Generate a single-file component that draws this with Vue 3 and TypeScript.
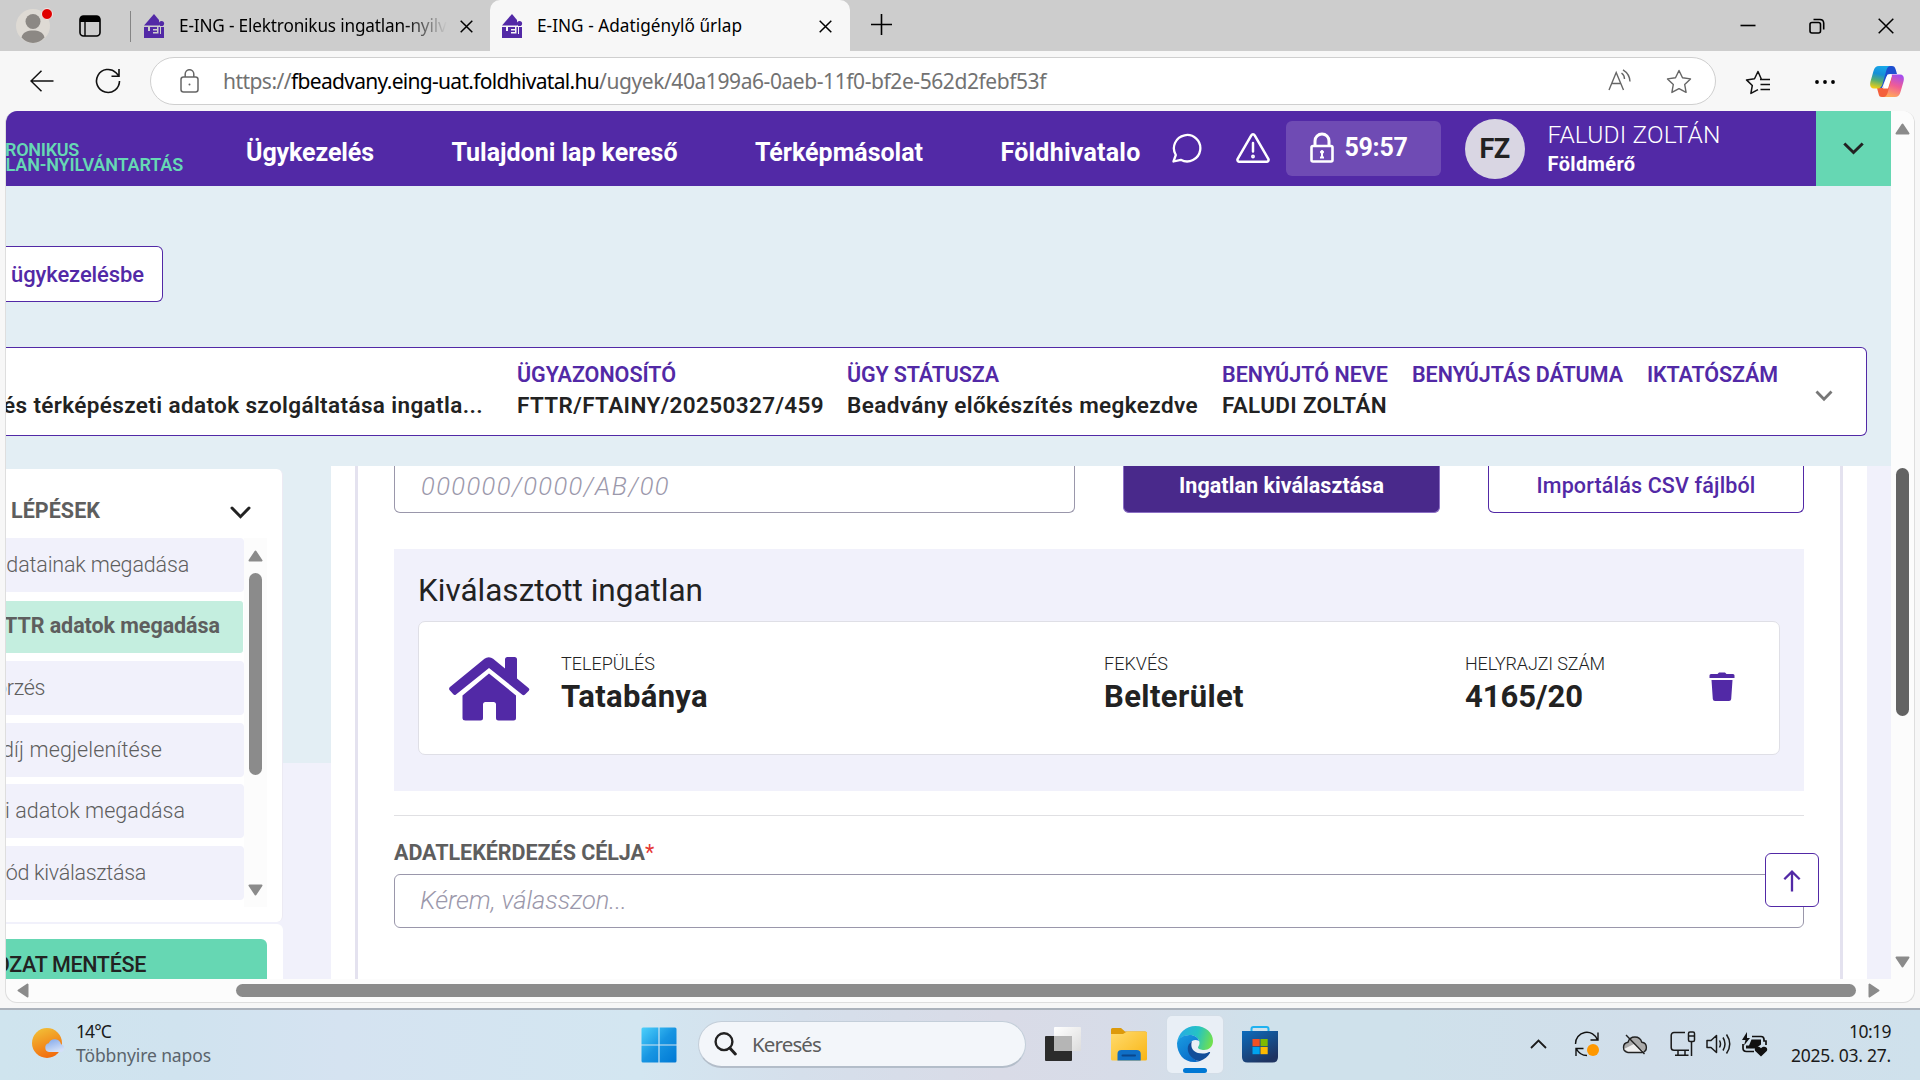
<script setup lang="ts">
import type { Directive } from 'vue'

// Tracks text so that it occupies the given advance width.
const vFit: Directive<HTMLElement, number> = {
  mounted(el, { value }) {
    const count = (el.textContent ?? '').length
    const natural = el.getBoundingClientRect().width
    if (count > 0) el.style.letterSpacing = `${((value - natural) / count).toFixed(3)}px`
  },
}

interface Label { text: string; width: number }
interface Fact { label: string; labelWidth: number; value: string; valueWidth: number; column: number }

const nav: Label[] = [
  { text: 'Ügykezelés', width: 128 },
  { text: 'Tulajdoni lap kereső', width: 226 },
  { text: 'Térképmásolat', width: 168 },
  { text: 'Földhivatalo', width: 140 },
]

const caseFacts: Fact[] = [
  { label: 'ÜGYAZONOSÍTÓ', labelWidth: 159, value: 'FTTR/FTAINY/20250327/459', valueWidth: 307, column: 330 },
  { label: 'ÜGY STÁTUSZA', labelWidth: 152, value: 'Beadvány előkészítés megkezdve', valueWidth: 351, column: 375 },
  { label: 'BENYÚJTÓ NEVE', labelWidth: 166, value: 'FALUDI ZOLTÁN', valueWidth: 165, column: 190 },
  { label: 'BENYÚJTÁS DÁTUMA', labelWidth: 211, value: '', valueWidth: 0, column: 235 },
  { label: 'IKTATÓSZÁM', labelWidth: 131, value: '', valueWidth: 0, column: 168 },
]

const steps: (Label & { end: number; active?: boolean })[] = [
  { text: 'adatainak megadása', width: 194, end: 183 },
  { text: 'FTTR adatok megadása', width: 228, end: 214, active: true },
  { text: 'Ellenőrzés', width: 93, end: 39 },
  { text: 'díj megjelenítése', width: 160, end: 156 },
  { text: 'i adatok megadása', width: 180, end: 179 },
  { text: 'mód kiválasztása', width: 159, end: 140 },
]

const parcel: Fact[] = [
  { label: 'TELEPÜLÉS', labelWidth: 94, value: 'Tatabánya', valueWidth: 147, column: 543 },
  { label: 'FEKVÉS', labelWidth: 64, value: 'Belterület', valueWidth: 140, column: 361 },
  { label: 'HELYRAJZI SZÁM', labelWidth: 140, value: '4165/20', valueWidth: 118, column: 244 },
]
</script>

<template>
  <div class="desktop">
    <div class="tabstrip">
      <svg class="profile" width="40" height="42" viewBox="0 0 40 42">
        <circle cx="18" cy="24" r="17" fill="#dedad4" />
        <circle cx="18" cy="19.500" r="7.500" fill="#8c8884" />
        <path d="M6.500 35.500C8 30 12.500 28.500 18 28.500s10 1.500 11.500 7A16.500 16.500 0 0 1 18 41a16.500 16.500 0 0 1-11.500-5.500z" fill="#8c8884" />
        <circle cx="32" cy="12" r="5.500" fill="#e00000" stroke="#eee" />
      </svg>
      <svg class="tab-actions" width="22" height="22" viewBox="0 0 22 22">
        <rect x="1" y="1" width="20" height="20" rx="3.500" fill="none" stroke="#000" stroke-width="1.600" />
        <path d="M1 7V4a3 3 0 0 1 3-3h14a3 3 0 0 1 3 3v3z" />
        <path d="M6 7v14" stroke="#000" stroke-width="1.400" />
      </svg>
      <span class="divider" />
      <div class="tab">
        <svg width="22" height="24" viewBox="0 0 22 24" fill="#5229a6">
          <path d="M1 11.500 11 0l5 6v5.500z" /><circle cx="18.500" cy="9.500" r="2.600" />
          <path d="M1 13h4v4h2v-4h7v2h-4v1.500h4V18h-4v1.500h5.500V13H17v7h1v-7h3v11H1z" />
        </svg>
        <div class="tab-title fade"><span v-fit="277" class="t">E-ING - Elektronikus ingatlan-nyilvá</span></div>
        <svg class="close1" width="13" height="13" viewBox="0 0 13 13" stroke="#000" stroke-width="1.500"><path d="M.7.700l11.600 11.600M12.300.700.700 12.300" /></svg>
      </div>
      <div class="tab active">
        <svg width="22" height="24" viewBox="0 0 22 24" fill="#5229a6">
          <path d="M1 11.500 11 0l5 6v5.500z" /><circle cx="18.500" cy="9.500" r="2.600" />
          <path d="M1 13h4v4h2v-4h7v2h-4v1.500h4V18h-4v1.500h5.500V13H17v7h1v-7h3v11H1z" />
        </svg>
        <div class="tab-title"><span v-fit="205" class="t">E-ING - Adatigénylő űrlap</span></div>
        <svg class="close2" width="13" height="13" viewBox="0 0 13 13" stroke="#000" stroke-width="1.500"><path d="M.7.700l11.600 11.600M12.300.700.700 12.300" /></svg>
      </div>
      <svg class="newtab" width="21" height="21" viewBox="0 0 21 21" stroke="#000" stroke-width="1.600"><path d="M10.500 0v21M0 10.500h21" /></svg>
      <div class="window-buttons">
        <svg width="16" height="16" viewBox="0 0 16 16" stroke="#000" stroke-width="1.600"><path d="M.5 7.500h15" /></svg>
        <svg width="16" height="16" viewBox="0 0 16 16" fill="none" stroke="#000" stroke-width="1.600"><rect x="1" y="4.500" width="10.500" height="10.500" rx="2" /><path d="M4.500 1.500H11A3.800 3.800 0 0 1 14.700 5v6.500" /></svg>
        <svg width="16" height="16" viewBox="0 0 16 16" stroke="#000" stroke-width="1.500"><path d="M.7.700l14.600 14.600M15.300.700.700 15.300" /></svg>
      </div>
    </div>

    <div class="toolbar">
      <svg class="back" width="24" height="22" viewBox="0 0 24 22" fill="none" stroke="#111" stroke-width="1.500"><path d="M23.500 11H1M11.500.700 1 11l10.500 10.300" /></svg>
      <svg class="reload" width="26" height="26" viewBox="0 0 26 26" fill="none" stroke="#111" stroke-width="1.600"><path d="M24.500 13A11.500 11.500 0 1 1 21 4.700L24 8M24 1v7.200h-7.500" /></svg>
      <div class="address">
        <svg class="padlock" width="19" height="24" viewBox="0 0 19 24" fill="none" stroke="#666" stroke-width="1.500"><rect x="1" y="8" width="17" height="15" rx="2.500" /><path d="M5.200 8V5a4.300 4.300 0 0 1 8.600 0v3" /><circle cx="9.500" cy="15.500" r="1" fill="#666" stroke="none" /></svg>
        <div class="url"><span v-fit="68" class="t">https://</span><span v-fit="308" class="t host">fbeadvany.eing-uat.foldhivatal.hu</span><span v-fit="447" class="t">/ugyek/40a199a6-0aeb-11f0-bf2e-562d2febf53f</span></div>
        <svg class="read" width="24" height="22" viewBox="0 0 24 22" fill="none" stroke="#666" stroke-width="1.400"><path d="M1 21 8.200 3.500 15.500 21M3.800 14.500h8.900M13.500 4c2 1.500 3 3.500 3 6M15 .800c4 2.500 6.800 6.500 7 11.700" /></svg>
        <svg class="star" width="26" height="25" viewBox="0 0 26 25" fill="none" stroke="#666" stroke-width="1.400" stroke-linejoin="round"><path d="m13 1.500 3.500 7.300 8 1.100-5.800 5.600 1.400 7.900-7.100-3.800-7.100 3.800 1.400-7.900L1.500 9.900l8-1.100z" /></svg>
      </div>
      <svg class="favs" width="26" height="25" viewBox="0 0 26 25" fill="none" stroke="#111" stroke-width="1.500" stroke-linejoin="round"><path d="M16.500 9.500 13 1.500 9.500 8.800l-8 1.100 5.800 5.600-1.400 7.900 7.100-3.800M15 9.500h10M15.500 14.500H25M15.500 19.500H25" /></svg>
      <svg class="dots" width="20" height="4" viewBox="0 0 20 4"><circle cx="2" cy="2" r="1.900" /><circle cx="10" cy="2" r="1.900" /><circle cx="18" cy="2" r="1.900" /></svg>
      <svg class="copilot" width="34" height="31" viewBox="0 0 34 31">
        <defs>
          <linearGradient id="cpA" x1=".5" y1="0" x2=".3" y2="1"><stop offset="0" stop-color="#18a7e8" /><stop offset=".35" stop-color="#168fd8" /><stop offset=".65" stop-color="#57ae72" /><stop offset="1" stop-color="#f4cf12" /></linearGradient>
          <linearGradient id="cpB" x1=".7" y1="0" x2=".4" y2="1"><stop offset="0" stop-color="#a44df0" /><stop offset=".5" stop-color="#f05c96" /><stop offset="1" stop-color="#ffa75b" /></linearGradient>
        </defs>
        <path d="M15 0h7c2 0 3 1 3.700 3.500L27 8h-6c-3 0-4.500 2-5.300 4.500L12 22H7l4-17C12 2 13 0 15 0z" fill="#1d4fd0" />
        <path d="M10 31h8c2.500 0 4-2 5-5l4-16h-6l-8 12H7l1.500 5.500C9 30 9.500 31 12 31z" fill="#f4603c" />
        <path d="M13 22.500 17.500 8.500h5L18 22.500z" fill="#fff" />
        <path d="M9 0h11c-2 .500-3 2-3.700 4.500L12.500 18c-1 3-2.500 4.500-5 4.500H4C.5 22.500-.500 19.500.500 15.500L3.500 5C4.500 1.500 6 0 9 0z" fill="url(#cpA)" />
        <path d="M21.500 8.500H30c3.500 0 4.500 3 3.500 7l-3 10.500c-1 3.500-2.500 5-5.500 5H14c2-.500 3-2 3.700-4.500L21.500 13c1-3 0-4.500 0-4.500z" fill="url(#cpB)" />
      </svg>
    </div>

    <div class="frame">
      <div class="viewport">
        <div class="page">
          <header class="header">
            <div class="brand"><span v-fit="125" class="t b1">ELEKTRONIKUS</span><span v-fit="229" class="t b2">INGATLAN-NYILVÁNTARTÁS</span></div>
            <nav class="nav"><span v-for="n in nav" :key="n.text" v-fit="n.width" class="t">{{ n.text }}</span></nav>
            <svg class="chat" width="30" height="30" viewBox="0 0 30 30" fill="none" stroke="#fff" stroke-width="2.300" stroke-linejoin="round"><path d="M1.500 28.500 3.800 22A13.200 13.200 0 1 1 8.800 26.800z" /></svg>
            <svg class="warn" width="34" height="30" viewBox="0 0 34 30" fill="none" stroke="#fff" stroke-width="2.300" stroke-linejoin="round" stroke-linecap="round"><path d="M15.300 2.300a2 2 0 0 1 3.400 0l13.600 23.500a2 2 0 0 1-1.700 3H3.400a2 2 0 0 1-1.700-3zM17 10v8.500" stroke-width="2.500" /><circle cx="17" cy="23.500" r=".8" /></svg>
            <div class="timer">
              <svg width="24" height="31" viewBox="0 0 24 31" fill="none" stroke="#fff"><rect x="1.500" y="14" width="21" height="15.500" rx="1.500" stroke-width="2.600" /><path d="M5 14V9a7 7 0 0 1 14 0v5" stroke-width="3" /><path d="M12 19v7M10 25.500h4" stroke-width="2" /><circle cx="12" cy="20" r="1.500" fill="#fff" /></svg>
              <span v-fit="63" class="t">59:57</span>
            </div>
            <div class="avatar"><span v-fit="30" class="t">FZ</span></div>
            <div class="user"><span v-fit="173" class="t name">FALUDI ZOLTÁN</span><span v-fit="88" class="t role">Földmérő</span></div>
            <div class="menu"><svg width="21" height="13" viewBox="0 0 21 13" fill="none" stroke="#222" stroke-width="3"><path d="m1.300 1.500 9.200 9 9.200-9" /></svg></div>
          </header>

          <button class="back-button"><span v-fit="133" class="t">ügykezelésbe</span></button>

          <section class="case">
            <div class="case-type"><span v-fit="480" class="t value">és térképészeti adatok szolgáltatása ingatla...</span></div>
            <div v-for="f in caseFacts" :key="f.label" class="fact" :style="{ width: f.column + 'px' }">
              <span v-fit="f.labelWidth" class="t label">{{ f.label }}</span>
              <span v-fit="f.valueWidth" class="t value">{{ f.value }}</span>
            </div>
            <svg class="case-toggle" width="18" height="12" viewBox="0 0 18 12" fill="none" stroke="#777" stroke-width="2.800"><path d="m1.500 1.500 7.500 7.700 7.500-7.700" /></svg>
          </section>

          <div class="workspace">
            <aside class="side">
              <div class="steps">
                <div class="steps-head"><span v-fit="89" class="t">LÉPÉSEK</span><svg width="21" height="14" viewBox="0 0 21 14" fill="none" stroke="#222" stroke-width="3" stroke-linecap="round"><path d="m2 2 8.500 8.700L19 2" /></svg></div>
                <div class="steps-body">
                  <div class="step-list">
                    <div v-for="s in steps" :key="s.text" class="step" :class="{ on: s.active }">
                      <div class="step-text" :style="{ width: s.end + 'px' }"><span v-fit="s.width" class="t">{{ s.text }}</span></div>
                    </div>
                  </div>
                  <div class="inner-scroll">
                    <svg width="15" height="12" viewBox="0 0 15 12"><path d="M7.500 1.500 13.500 10.500h-12z" /></svg>
                    <i />
                    <svg class="down" width="15" height="12" viewBox="0 0 15 12"><path d="M7.500 10.500 1.500 1.500h12z" /></svg>
                  </div>
                </div>
              </div>
              <div class="save"><div class="save-button"><div class="save-text"><span v-fit="151" class="t">OZAT MENTÉSE</span></div></div></div>
            </aside>

            <main class="main">
              <div class="form">
                <div class="lookup">
                  <div class="field"><span v-fit="249" class="t">000000/0000/AB/00</span></div>
                  <div class="btn solid"><span v-fit="205" class="t">Ingatlan kiválasztása</span></div>
                  <div class="btn"><span v-fit="219" class="t">Importálás CSV fájlból</span></div>
                </div>
                <div class="panel">
                  <div class="panel-title"><span v-fit="285" class="t">Kiválasztott ingatlan</span></div>
                  <div class="card">
                    <svg class="house" width="82" height="65" viewBox="0 0 82 65" fill="#5229a6"><path d="M2 31 36.500 2.800a6.500 6.500 0 0 1 8.600 0L57 12.500V3.500Q57 1 59.500 1h7Q69 1 69 3.500v19L80.500 32q1.500 1.300.3 2.700L77 38.500q-1.300 1.200-2.700.2L41 12 8 38.500q-1.500 1.200-2.700-.200L1.500 34Q.5 32.300 2 31z" /><path d="m41 17.500 27 22V62q0 2.500-2.500 2.500H50.500Q48 64.500 48 62V48.500Q48 46 45.500 46h-8Q35 46 35 48.500V62q0 2.500-2.500 2.500h-15Q14.500 64.500 14.500 62V39.500z" /></svg>
                    <div v-for="p in parcel" :key="p.label" class="parcel" :style="{ width: p.column + 'px' }">
                      <span v-fit="p.labelWidth" class="t small">{{ p.label }}</span>
                      <span v-fit="p.valueWidth" class="t big">{{ p.value }}</span>
                    </div>
                    <svg class="trash" width="26" height="30" viewBox="0 0 26 30" fill="#5229a6"><path d="M8.500 2 10 .500h6L17.500 2H24q1.500 0 1.500 1.500V6H.5V3.500Q.5 2 2 2zM2.500 8h21l-1.300 19q-.2 2-2.200 2H6q-2 0-2.200-2z" /></svg>
                  </div>
                </div>
                <hr />
                <div class="purpose"><span v-fit="251" class="t">ADATLEKÉRDEZÉS CÉLJA</span><em>*</em></div>
                <div class="select"><span v-fit="207" class="t">Kérem, válasszon...</span></div>
              </div>
            </main>
            <div class="gutter" />
          </div>
          <div class="to-top"><svg width="18" height="22" viewBox="0 0 18 22" fill="none" stroke="#5229a6" stroke-width="2.300"><path d="M9 21.500V2M1.300 9.200 9 1.700l7.700 7.500" /></svg></div>
        </div>

        <div class="vscroll">
          <svg width="15" height="12" viewBox="0 0 15 12"><path d="M7.500 1.500 13.500 10.500h-12z" /></svg>
          <i />
          <svg class="down" width="15" height="12" viewBox="0 0 15 12"><path d="M7.500 10.500 1.500 1.500h12z" /></svg>
        </div>
        <div class="hscroll">
          <svg width="12" height="15" viewBox="0 0 12 15"><path d="M1.500 7.500 10.500 1.500v12z" /></svg>
          <i />
          <svg class="right" width="12" height="15" viewBox="0 0 12 15"><path d="M10.500 7.500 1.500 1.500v12z" /></svg>
        </div>
      </div>
    </div>

    <div class="taskbar">
      <svg class="weather" width="34" height="32" viewBox="0 0 34 32">
        <defs><linearGradient id="sun" x1=".2" y1="0" x2=".6" y2="1"><stop offset="0" stop-color="#f2c037" /><stop offset="1" stop-color="#f26a0c" /></linearGradient>
          <linearGradient id="cloud" x1="0" y1="0" x2=".5" y2="1"><stop offset="0" stop-color="#7fa6ea" /><stop offset="1" stop-color="#d3e0f8" /></linearGradient></defs>
        <circle cx="15" cy="16" r="15" fill="url(#sun)" />
        <path d="M17 25a4.500 4.500 0 0 1-.3-8.800A6.500 6.500 0 0 1 29 17.300 4 4 0 0 1 29.500 25z" fill="url(#cloud)" />
      </svg>
      <div class="weather-text"><span v-fit="35" class="t">14°C</span><span v-fit="135" class="t dim">Többnyire napos</span></div>
      <svg class="start" width="36" height="36" viewBox="0 0 36 36">
        <defs><linearGradient id="win" x1="0" y1="0" x2="1" y2="1"><stop offset="0" stop-color="#4cd0fb" /><stop offset=".5" stop-color="#1795e2" /><stop offset="1" stop-color="#0078d4" /></linearGradient></defs>
        <path d="M2 .500h15.400v16.900H.500V2Q.5.500 2 .500zM18.600.500H34q1.500 0 1.500 1.500v15.400H18.600zM.5 18.600h16.900v16.900H2Q.5 35.500.500 34zM18.600 18.600h16.900V34q0 1.500-1.500 1.500H18.600z" fill="url(#win)" />
      </svg>
      <div class="search">
        <svg width="23" height="24" viewBox="0 0 23 24" fill="none" stroke="#222" stroke-width="2.400" stroke-linecap="round"><circle cx="10" cy="9.700" r="8.400" /><path d="m15.800 16 5.500 6" stroke-width="3" /></svg>
        <span v-fit="69" class="t">Keresés</span>
      </div>
      <svg class="taskview" width="36" height="36" viewBox="0 0 36 36">
        <defs><linearGradient id="tv" x1="0" y1="0" x2="1" y2="1"><stop offset="0" stop-color="#fff" /><stop offset="1" stop-color="#dcdcdc" /></linearGradient></defs>
        <rect x="0" y="10" width="27" height="25" rx="1" fill="#2b2b2b" /><rect x="9" y="1" width="27" height="24" rx="1" fill="url(#tv)" /><path d="M9 10h18v15H9z" fill="#b5b5b5" />
      </svg>
      <svg class="folder" width="36" height="33" viewBox="0 0 36 33">
        <defs><linearGradient id="fold" x1="0" y1="0" x2="1" y2="1"><stop offset="0" stop-color="#ffdb6e" /><stop offset="1" stop-color="#f9b514" /></linearGradient></defs>
        <path d="M0 1.500Q0 0 1.500 0H10l4 3.500H34q2 0 2 2V9H0z" fill="#dd9a0b" /><path d="M0 6h12l4-2.500h18.500q1.500 0 1.500 1.500v26q0 1.500-1.500 1.500h-33Q0 32.500 0 31z" fill="url(#fold)" />
        <path d="M6.500 32.500V26q0-4 4-4h15.200q4 0 4 4v6.500z" fill="#0f6fc6" /><rect x="10.500" y="26.500" width="14.500" height="2" rx="1" fill="#0a478c" />
      </svg>
      <div class="edge">
        <svg width="36" height="36" viewBox="0 0 36 36">
          <defs>
            <linearGradient id="e1" x1="0" y1=".3" x2="1" y2=".5"><stop offset="0" stop-color="#27a9e8" /><stop offset=".55" stop-color="#25c3c3" /><stop offset="1" stop-color="#70e04e" /></linearGradient>
            <linearGradient id="e2" x1="0" y1="0" x2=".6" y2="1"><stop offset="0" stop-color="#1a9de2" /><stop offset="1" stop-color="#0a6cc9" /></linearGradient>
          </defs>
          <path d="M0 17C1 7 9 0 18.500 0 29 0 36 7 36 15c0 6-4.500 9-9 9-3 0-6-1-6-2.500 0-1 1.500-2 1.500-4.500 0-4-4-8-10-8C6 9 1.500 13 0 17z" fill="url(#e1)" />
          <path d="M0 17c1.500-5 6-8 12.500-8 5 0 8.500 2.500 9.500 6-2-1.500-5-1.500-7 0-3 2-5 8-1 14 2.500 4 6 6.500 9 6-2 .8-4 1-6 1C7 36 0 28 0 17z" fill="url(#e2)" />
          <path d="M15 15c-6 4-5 11-1 15.500 3 3.500 6.500 4.800 9 4.500 4.500-1.500 8-4.500 10-8 .4-.8-.3-1.300-1-.9-2 1-4 1.500-6.500 1.500-7 0-10.500-3.600-11-7-.3-2.500 0-4 .5-5.600z" fill="#114d99" />
        </svg>
        <i />
      </div>
      <svg class="store" width="36" height="37" viewBox="0 0 36 37">
        <defs><linearGradient id="st" x1="0" y1="0" x2=".6" y2="1"><stop offset="0" stop-color="#0c6cbd" /><stop offset="1" stop-color="#1f3461" /></linearGradient></defs>
        <path d="M9.500 7V3q0-2 2-2h13q2 0 2 2v4" fill="none" stroke="#1fb2f0" stroke-width="2" /><path d="M0 5h36v26q0 5.500-5.500 5.500h-25Q0 36.500 0 31z" fill="url(#st)" />
        <path d="M10.500 13h7.200v7.200h-7.200z" fill="#f25022" /><path d="M18.500 13h7.200v7.200h-7.200z" fill="#7fba00" /><path d="M10.500 21h7.200v7.200h-7.200z" fill="#00a4ef" /><path d="M18.500 21h7.200v7.200h-7.200z" fill="#ffb900" />
      </svg>
      <div class="tray">
        <svg class="up" width="17" height="10" viewBox="0 0 17 10" fill="none" stroke="#1a1a1a" stroke-width="1.800"><path d="m1 9 7.500-7.500L16 9" /></svg>
        <svg class="sync" width="26" height="26" viewBox="0 0 26 26" fill="none" stroke="#111" stroke-width="1.400"><path d="M1.500 13A11.300 11.300 0 0 1 23.500 9M24 1.500V9h-7.500M2 25v-7.500h7.500M2.500 18c2 4 6 6.500 10.500 6.500" /><circle cx="19" cy="19" r="6" fill="#ff9800" stroke="none" /></svg>
        <svg class="cloud" width="26" height="21" viewBox="0 0 26 21" fill="none" stroke="#222" stroke-width="1.400"><path d="M6 18.500a5.200 5.200 0 0 1 0-10.300 7.200 7.200 0 0 1 13.800 0 5.200 5.200 0 0 1 .2 10.300z" fill="#aaa" /><path d="m2 15 10-5 10 7.500H6z" fill="#eee" stroke="none" /><path d="M4 1l18.500 19" /></svg>
        <svg class="net" width="26" height="26" viewBox="0 0 26 26" fill="none" stroke="#1a1a1a" stroke-width="1.500"><path d="M15 1.500H4A2.800 2.800 0 0 0 1.200 4.300V16.500A2.800 2.800 0 0 0 4 19.300h15M8 19.500V24M15 19.500V24M5 24.300h13.500M21.500 10.500V25" /><rect x="18.500" y="1" width="6" height="9.500" rx="1.500" /><path d="M18.500 5h6" /></svg>
        <svg class="sound" width="26" height="22" viewBox="0 0 26 22" fill="none" stroke="#1a1a1a" stroke-width="1.500" stroke-linejoin="round"><path d="M1 7.500h4l5.500-5v17L5 14.500H1zM13.500 7.500q2 3.500 0 7M17 4.500q4 6.500 0 13M20.500 1.500q6.500 9.500 0 19" /></svg>
        <svg class="battery" width="26" height="25" viewBox="0 0 26 25" fill="none" stroke="#111" stroke-width="1.700"><path d="M10 4.500h9Q22 4.500 22 7.500V9h2v4M1 12v4Q1 19.500 4.500 19.500H12" /><path d="M9.500 7.500H19v5l-5.500 4H4v-3h3zM5 0 0 8h3.500L2 13.500 8 6H5z" fill="#111" stroke="none" /><path d="m19 24.500-5.500-5.300c-2.500-3 2-6.500 5.500-3 3.500-3.500 8 0 5.500 3z" fill="#111" stroke="none" /></svg>
        <div class="clock"><span v-fit="42" class="t">10:19</span><span v-fit="100" class="t">2025. 03. 27.</span></div>
      </div>
    </div>
  </div>
</template>

<style>
html, body { margin: 0; overflow: hidden; }
</style>

<style scoped>
.desktop { width: 1920px; height: 1080px; display: flex; flex-direction: column; overflow: hidden; background: #f7f7f7; font-family: "Noto Sans", "Open Sans", sans-serif; color: #000; }
.desktop *, .desktop { box-sizing: border-box; }
.t { display: inline-block; white-space: pre; flex: none; }
svg { display: block; flex: none; }

.tabstrip { height: 51px; background: #cdcdcd; display: flex; align-items: flex-start; flex: none; }
.profile { margin: 2px 0 0 15px; }
.tab-actions { margin: 15px 0 0 24px; }
.divider { width: 1px; height: 31px; margin: 11px 0 0 29px; background: #858585; }
.tab { height: 51px; width: 359px; display: flex; align-items: flex-start; padding: 14px 0 0 12px; }
.tab.active { background: #f7f7f7; border-radius: 10px 10px 0 0; padding-left: 11px; width: 360px; }
.tab-title { width: 268px; height: 26px; overflow: hidden; margin: -1px 0 0 14px; font-size: 17.200px; line-height: 26px; }
.fade { mask-image: linear-gradient(90deg, #000 84%, transparent 100%); }
.active .tab-title { width: 267px; }
.close1 { margin: 6px 0 0 13px; }
.close2 { margin: 6px 0 0 15px; }
.newtab { margin: 14px 0 0 21px; }
.window-buttons { display: flex; gap: 53px; margin: 18px 26px 0 auto; }

.toolbar { height: 60px; display: flex; align-items: flex-start; flex: none; }
.back { margin: 19px 0 0 30px; }
.reload { margin: 17px 0 0 41px; }
.address { width: 1566px; height: 48px; margin: 6px 0 0 29px; border: 1px solid #cfcfcf; border-radius: 24px; background: #fff; display: flex; align-items: flex-start; }
.padlock { margin: 11px 0 0 29px; }
.url { margin: 7px 0 0 25px; font-size: 21px; line-height: 32px; color: #727272; display: flex; width: 1384px; }
.url .t:first-child { margin-left: -1px; }
.host { color: #000; }
.read { margin: 11px 0 0 0; }
.star { margin: 11px 0 0 34px; }
.favs { margin: 19px 0 0 29px; }
.dots { margin: 29px 0 0 44px; }
.copilot { margin: 15px 0 0 35px; }

.frame { height: 899px; padding: 0 5px; border-bottom: 2px solid #abb2bb; flex: none; }
.viewport { width: 1910px; height: 892px; border: 1px solid #dedede; border-top: 0; border-radius: 12px; overflow: hidden; background: #fcfcfc; display: grid; grid-template-columns: 1885px 23px; grid-template-rows: 868px 23px; }
.page { position: relative; overflow: hidden; background: linear-gradient(#e3eef4 652px, #f1f1fb 652px); font-family: Roboto, "Noto Sans", sans-serif; color: #222; }

.header { height: 75px; background: #5229a6; display: flex; align-items: flex-start; color: #fff; }
.brand { width: 177px; height: 75px; padding-top: 31px; display: flex; flex-direction: column; align-items: flex-end; color: #66d8b4; font-weight: 600; font-size: 18px; line-height: 15px; flex: none; }
.b1 { margin-right: 104px; }
.nav { display: flex; gap: 77.500px; margin: 27px 0 0 63px; font-size: 25px; font-weight: 700; line-height: 30px; }
.chat { margin: 22px 0 0 31px; }
.warn { margin: 22px 0 0 34px; }
.timer { width: 155px; height: 55px; margin: 10px 0 0 16px; background: #6f4bb4; border-radius: 6px; display: flex; align-items: center; gap: 11px; padding: 0 0 2px 24px; font-size: 25px; font-weight: 700; }
.avatar { width: 60px; height: 60px; margin: 8px 0 0 24px; border-radius: 50%; background: #d9d6e3; color: #222; display: flex; align-items: center; justify-content: center; font-weight: 700; font-size: 27px; padding-bottom: 1px; }
.user { margin: 9px 0 0 23px; display: flex; flex-direction: column; align-items: flex-start; }
.name { font-size: 24.500px; line-height: 30px; font-weight: 300; }
.role { font-size: 20px; line-height: 28px; font-weight: 700; }
.menu { width: 75px; height: 75px; margin-left: auto; background: #66d7b3; display: flex; align-items: center; justify-content: center; }

.back-button { width: 157px; height: 56px; margin: 60px 0 0; padding: 2px 18px 0 0; display: flex; justify-content: flex-end; align-items: center; overflow: hidden; background: #fff; border: 1px solid #5229a6; border-left: 0; border-radius: 0 6px 6px 0; color: #5229a6; font: 500 22px/30px Roboto, sans-serif; }
.case { height: 89px; width: 1861px; margin-top: 45px; background: #fff; border: 1px solid #5229a6; border-left: 0; border-radius: 0 6px 6px 0; display: flex; align-items: flex-start; padding-top: 11px; font-size: 21.500px; line-height: 31px; }
.case-type { width: 477px; margin: 31px 34px 0 0; display: flex; justify-content: flex-end; overflow: hidden; }
.fact { display: flex; flex-direction: column; align-items: flex-start; flex: none; }
.label { color: #5229a6; font-weight: 600; }
.value { font-weight: 600; font-size: 22.500px; }
.case-toggle { margin-top: 31px; }

.workspace { display: flex; align-items: flex-start; margin-top: 30px; height: 513px; }
.side { width: 277px; padding-top: 2.500px; margin-right: 48px; flex: none; }
.steps { height: 453.500px; background: #fff; border-radius: 0 6px 6px 0; border-right: 1px solid #eceaf3; }
.steps-head { height: 69.500px; display: flex; align-items: flex-start; justify-content: space-between; padding: 26px 31px 0 5px; color: #5e5e5e; font-weight: 700; font-size: 21.500px; line-height: 32px; }
.steps-head svg { margin-top: 11px; }
.steps-body { display: flex; height: 369px; }
.step-list { width: 238px; display: flex; flex-direction: column; gap: 7.500px; }
.step { height: 54px; flex: none; background: #f1f1fb; border-radius: 0 4px 4px 0; color: #5e5e5e; font-size: 21.500px; line-height: 53px; font-weight: 300; overflow: hidden; }
.step.on { background: #c4eedf; font-weight: 700; border: solid #fff; border-width: 1px 1px 1px 0; line-height: 50px; }
.step-text { display: flex; justify-content: flex-end; }
.inner-scroll, .vscroll { width: 23px; background: #fcfcfc; display: flex; flex-direction: column; align-items: center; padding-right: 1px; }
.inner-scroll svg, .vscroll svg, .hscroll svg { fill: #8b8b8b; stroke: #8b8b8b; stroke-width: 2px; stroke-linejoin: round; }
.inner-scroll svg { margin-top: 12px; }
.inner-scroll i { width: 13px; height: 202px; margin-top: 11px; border-radius: 7px; background: #8b8b8b; }
.inner-scroll .down { margin-top: 109px; }
.save { height: 57px; margin-top: 2px; padding-top: 15px; background: #fff; border-radius: 0 6px 0 0; }
.save-button { width: 261px; height: 42px; background: #66d7b3; border-radius: 0 6px 0 0; overflow: hidden; }
.save-text { width: 140px; display: flex; justify-content: flex-end; padding-top: 11px; font-size: 21.500px; line-height: 30px; font-weight: 500; }

.main { width: 1536px; height: 513px; background: #fff; padding: 0 24px; flex: none; }
.gutter { flex: 1; height: 513px; background: #f1f1fb; }
.form { height: 513px; border: solid #e4e2ef; border-width: 0 3px; padding: 0 36px; }
.lookup { height: 47px; display: flex; gap: 48px; }
.field { width: 681px; border: 1px solid #9a97ab; border-top: 0; border-radius: 0 0 6px 6px; padding: 4px 0 0 26px; }
.field, .select { color: #9b98ab; font-size: 25.500px; line-height: 32px; font-weight: 300; font-style: italic; }
.btn { width: 316px; border: 1px solid #5229a6; border-top: 0; border-radius: 0 0 6px 6px; color: #5229a6; display: flex; justify-content: center; padding-top: 5px; font-size: 21.500px; line-height: 30px; font-weight: 500; }
.btn.solid { width: 317px; background: #49298b; border-color: #8b6fc4; color: #fff; font-weight: 700; }
.panel { height: 242px; margin-top: 36px; padding: 0 24px; background: #f1f1fb; }
.panel-title { height: 72px; padding-top: 11.500px; font-size: 31.500px; line-height: 60px; }
.card { height: 134px; background: #fff; border: 1px solid #dfdfe6; border-radius: 7px; display: flex; align-items: flex-start; }
.house { margin: 34px 31px 0 29px; }
.parcel { display: flex; flex-direction: column; align-items: flex-start; margin-top: 30px; }
.small { font-size: 18px; line-height: 24px; font-weight: 300; }
.big { font-size: 31px; line-height: 41px; font-weight: 700; }
.trash { margin-top: 50px; }
hr { border: 0; height: 1px; background: #e0e0e3; margin: 24px 0 22px; }
.purpose { height: 36px; display: flex; color: #5e5e5e; font-size: 21.500px; line-height: 30px; font-weight: 700; }
.purpose em { color: #e53935; font-style: normal; font-weight: 400; }
.select { height: 54px; border: 1px solid #9a97ab; border-radius: 6px; padding: 9px 0 0 25px; }
.to-top { position: absolute; left: 1759px; top: 742px; width: 54px; height: 54px; border: 1px solid #5229a6; border-radius: 6px; background: #fff; display: flex; align-items: center; justify-content: center; padding-top: 2px; }

.vscroll { padding: 12px 0 0; }
.vscroll i { width: 13px; height: 248px; margin-top: 333px; border-radius: 7px; background: #636363; }
.vscroll .down { margin-top: 240px; }
.hscroll { grid-column: 1 / 3; display: flex; align-items: flex-start; padding: 4px 0 0 11px; }
.hscroll i { width: 1620px; height: 13px; margin-left: 207px; margin-top: 1px; border-radius: 7px; background: #8b8b8b; }
.hscroll .right { margin-left: 12px; }

.taskbar { height: 70px; display: flex; align-items: flex-start; flex: none; background: linear-gradient(90deg, #cfe4ee 0, #d0e3ef 180px, #d5e3f1 340px, #d3e6f1 640px, #d5dfeb 800px, #d9dbe7 1000px, #d7dce8 1120px, #cfe1eb 1270px, #cfe1eb 1400px, #d1deea 1650px, #cfe1ec 1920px); }
.weather { margin: 17px 0 0 32px; }
.weather-text { width: 565px; margin: 9px 0 0 10px; display: flex; flex-direction: column; align-items: flex-start; font-size: 17.500px; line-height: 24px; color: #1a1a1a; }
.dim { color: #5a646c; }
.start { margin: 17px 0 0 0; }
.search { width: 328px; height: 47px; margin: 11px 0 0 21px; border-radius: 24px; border: 1px solid #c3ced9; border-bottom: 2px solid #b3bdc9; background: #f3f6fa; display: flex; align-items: center; padding-left: 15px; gap: 15px; font-size: 20.500px; color: #5c5c5c; }
.taskview { margin: 16px 0 0 19px; }
.folder { margin: 18px 0 0 30px; }
.edge { width: 56px; height: 57px; margin: 6px 0 0 20px; border-radius: 5px; background: #e9eff6; box-shadow: 0 0 0 1px #d3dde7; display: flex; flex-direction: column; align-items: center; padding-top: 10px; }
.edge i { width: 24px; height: 5px; margin-top: 6px; border-radius: 3px; background: #0078d4; flex: none; }
.store { margin: 16px 0 0 19px; }
.tray { display: flex; align-items: flex-start; margin-left: auto; padding-right: 29px; }
.up { margin: 29px 27px 0 0; }
.sync { margin: 21px 22px 0 0; }
.cloud { margin: 24px 22px 0 0; }
.net { margin: 21px 10px 0 0; }
.sound { margin: 23px 10px 0 0; }
.battery { margin: 22px 23px 0 0; }
.clock { display: flex; flex-direction: column; align-items: flex-end; margin-top: 9px; font-size: 17.500px; line-height: 24px; color: #1a1a1a; }
</style>
